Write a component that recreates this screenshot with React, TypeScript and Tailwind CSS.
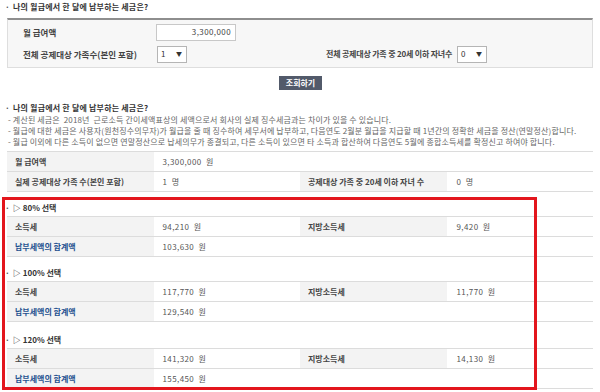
import React from "react";

const Bullet = () => <span className="mr-[3px] text-[#555]">·</span>;

function Select({ value }: { value: string }) {
  return (
    <div className="w-[30px] h-[17px] border border-[#b5b5b5] bg-white flex items-center justify-between pl-[3px] pr-[4px] text-[8px] text-[#333]">
      <span>{value}</span>
      <span className="text-[6px] leading-none">▼</span>
    </div>
  );
}

type Row = { l1: string; v1: string; l2?: string; v2?: string; blue?: boolean };

function Table({ rows, className = "" }: { rows: Row[]; className?: string }) {
  return (
    <div className={`ml-[7px] w-[586px] border-t border-[#dcdcdc] ${className}`}>
      {rows.map((r, i) => (
        <div key={i} className="grid grid-cols-4 h-[20px] border-b border-[#dcdcdc] text-[8px]">
          <div
            className={`bg-[#f3f3f3] pl-[8px] flex items-center font-bold ${
              r.blue ? "text-[#23508f]" : "text-[#444]"
            }`}
          >
            {r.l1}
          </div>
          <div className="pl-[9px] flex items-center text-[#555] tracking-[0.4px]">{r.v1}</div>
          {r.l2 ? (
            <div className="bg-[#f3f3f3] pl-[8px] flex items-center font-bold text-[#444]">{r.l2}</div>
          ) : (
            <div />
          )}
          {r.v2 ? (
            <div className="pl-[10px] flex items-center text-[#555] tracking-[0.4px]">{r.v2}</div>
          ) : (
            <div />
          )}
        </div>
      ))}
    </div>
  );
}

function Section({
  title,
  tax,
  local,
  total,
  className,
}: {
  title: string;
  tax: string;
  local: string;
  total: string;
  className: string;
}) {
  return (
    <div className={className}>
      <div className="h-[16px] pl-[5px] flex items-center text-[8px] font-bold text-[#333]">
        <Bullet />
        <span className="mr-[2px]">▷</span>
        {title}
      </div>
      <Table
        rows={[
          { l1: "소득세", v1: `${tax}  원`, l2: "지방소득세", v2: `${local}  원` },
          { l1: "납부세액의 합계액", v1: `${total}  원`, blue: true },
        ]}
      />
    </div>
  );
}

export default function App() {
  return (
    <div
      className="relative w-[600px] h-[392px] bg-white overflow-hidden whitespace-pre"
      style={{ fontFamily: '"Noto Sans CJK KR", "Noto Sans", sans-serif' }}
    >
      <div className="h-[14px] pl-[5px] flex items-center text-[8px] font-bold text-[#333] tracking-[0.2px]">
        <Bullet />
        나의 월급에서 한 달에 납부하는 세금은?
      </div>

      <div className="mt-[4px] ml-[7px] w-[586px] h-[50px] border-t-2 border-t-[#8e8e8e] border-x border-b border-x-[#dedede] border-b-[#dedede] bg-[#f7f7f7] text-[8.5px] font-bold text-[#444]">
        <div className="mt-[4px] h-[16px] flex items-center">
          <div className="pl-[15px] w-[148px]">월 급여액</div>
          <div className="w-[80px] h-[17px] border border-[#c8c8c8] bg-white flex items-center justify-end pr-[4px] font-normal text-[8px] text-[#444] tracking-[0.4px]">
            3,300,000
          </div>
        </div>
        <div className="mt-[6px] h-[16px] flex items-center">
          <div className="pl-[15px] w-[149px]">전체 공제대상 가족수(본인 포함)</div>
          <div className="font-normal">
            <Select value="1" />
          </div>
          <div className="ml-[139px] w-[131px] text-[8px] tracking-[-0.2px]">전체 공제대상 가족 중 20세 이하 자녀수</div>
          <div className="font-normal">
            <Select value="0" />
          </div>
        </div>
      </div>

      <div className="mt-[8px] flex justify-center">
        <div className="ml-[1px] w-[43px] h-[14px] bg-[#525a6a] text-white text-[8px] font-bold flex items-center justify-center">
          조회하기
        </div>
      </div>

      <div className="mt-[11px] h-[13px] pl-[5px] flex items-center text-[8px] font-bold text-[#333] tracking-[0.2px]">
        <Bullet />
        나의 월급에서 한 달에 납부하는 세금은?
      </div>
      <div className="pl-[8px] text-[8px] leading-[11px] text-[#666] tracking-[0.15px]">
        <div>- 계산된 세금은  2018년  근로소득 간이세액표상의 세액으로서 회사의 실제 징수세금과는 차이가 있을 수 있습니다.</div>
        <div>- 월급에 대한 세금은 사용자(원천징수의무자)가 월급을 줄 때 징수하여 세무서에 납부하고, 다음연도 2월분 월급을 지급할 때 1년간의 정확한 세금을 정산(연말정산)합니다.</div>
        <div>- 월급 이외에 다른 소득이 없으면 연말정산으로 납세의무가 종결되고, 다른 소득이 있으면 타 소득과 합산하여 다음연도 5월에 종합소득세를 확정신고 하여야 합니다.</div>
      </div>

      <Table
        className="mt-[4px]"
        rows={[
          { l1: "월 급여액", v1: "3,300,000  원" },
          {
            l1: "실제 공제대상 가족 수(본인 포함)",
            v1: "1  명",
            l2: "공제대상 가족 중 20세 이하 자녀 수",
            v2: "0  명",
          },
        ]}
      />

      <Section className="mt-[8px]" title="80% 선택" tax="94,210" local="9,420" total="103,630" />
      <Section className="mt-[8px]" title="100% 선택" tax="117,770" local="11,770" total="129,540" />
      <Section className="mt-[10px]" title="120% 선택" tax="141,320" local="14,130" total="155,450" />

      <div className="absolute left-[2px] top-[197px] w-[535px] h-[193px] border-[3px] border-[#e3161d] pointer-events-none" />
    </div>
  );
}
